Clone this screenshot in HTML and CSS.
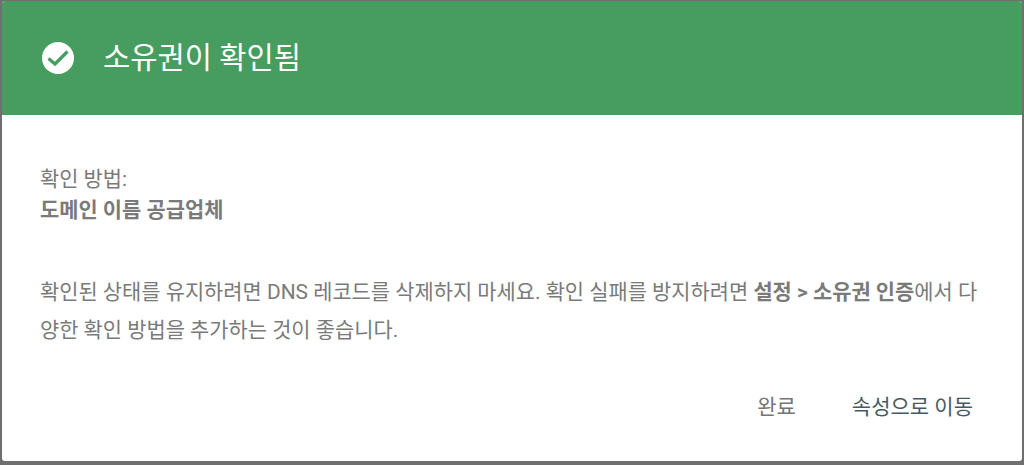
FILE: index.html
```html
<!DOCTYPE html>
<html lang="ko">
<head>
<meta charset="utf-8">
<title>소유권이 확인됨</title>
<link rel="stylesheet" href="styles.css">
</head>
<body>
<div class="dialog">
  <header class="head">
    <svg class="check" viewBox="0 0 32 32" width="32" height="32" aria-hidden="true">
      <circle cx="16" cy="16" r="16" fill="#fff"/>
      <path d="M6.5 16.5l6.5 5.5L25.5 9.5" fill="none" stroke="#479d60" stroke-width="3.2"/>
    </svg>
    <h1 class="title">소유권이 확인됨</h1>
  </header>
  <main class="body">
    <p class="method">확인 방법:<br><b>도메인 이름 공급업체</b></p>
    <p class="note">확인된 상태를 유지하려면 DNS 레코드를 삭제하지 마세요. 확인 실패를 방지하려면 <b>설정 &gt; 소유권 인증</b>에서 다양한 확인 방법을 추가하는 것이 좋습니다.</p>
  </main>
  <footer class="actions">
    <button class="btn">완료</button>
    <button class="btn primary">속성으로 이동</button>
  </footer>
</div>
</body>
</html>
```

FILE: styles.css
```css
html, body {
  margin: 0;
  height: 100%;
}
body {
  background: #6f6f6f;
  padding: 1px 2px 4px;
  box-sizing: border-box;
  font-family: Roboto, "Noto Sans CJK KR", sans-serif;
  overflow: hidden;
}
.dialog {
  height: 100%;
  background: #fff;
  border-radius: 3px;
  overflow: hidden;
  display: flex;
  flex-direction: column;
}
.head {
  height: 114px;
  flex: none;
  background: #479d60;
  display: flex;
  align-items: center;
  padding-left: 40px;
  gap: 29px;
}
.check { flex: none; }
.title {
  margin: 0;
  font-size: 29.6px;
  font-weight: 400;
  color: #fff;
  line-height: 36px;
}
.body {
  flex: 1;
  padding: 49px 38px 0;
  font-size: 20.9px;
  line-height: 31px;
  color: #7a7a7a;
}
.body p { margin: 0; }
.method { margin-bottom: 47px !important; }
.note { line-height: 38px; }
.actions {
  display: flex;
  justify-content: flex-end;
  align-items: center;
  gap: 40px;
  padding: 0 41px 34px 0;
}
.btn {
  background: none;
  border: 0;
  padding: 8px 8px;
  font: 400 21px/24px Roboto, "Noto Sans CJK KR", sans-serif;
  color: #757575;
}
.primary { color: #455a64; }
```
